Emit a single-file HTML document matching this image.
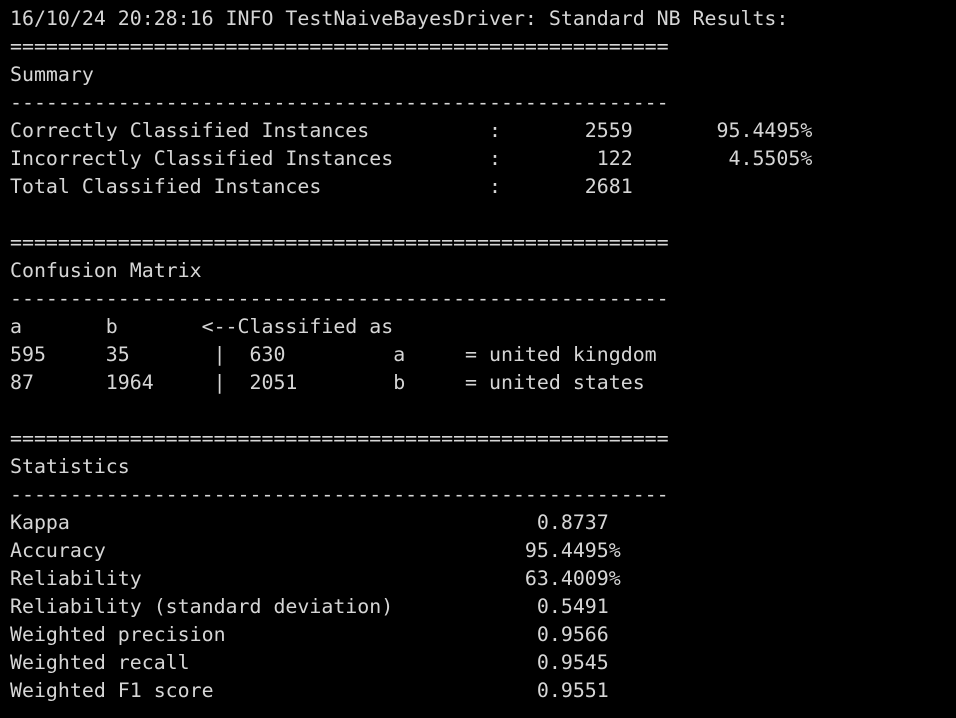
<!DOCTYPE html>
<html><head><meta charset="utf-8"><style>
html,body{margin:0;padding:0;background:#000;width:956px;height:718px;overflow:hidden}
pre{margin:0;position:absolute;left:10px;top:5px;font-family:"DejaVu Sans Mono","Liberation Mono",monospace;font-size:19.9px;line-height:28px;color:#d6d6d6}
</style></head><body>
<pre>16/10/24 20:28:16 INFO TestNaiveBayesDriver: Standard NB Results:
=======================================================
Summary
-------------------------------------------------------
Correctly Classified Instances          :       2559       95.4495%
Incorrectly Classified Instances        :        122        4.5505%
Total Classified Instances              :       2681

=======================================================
Confusion Matrix
-------------------------------------------------------
a       b       &lt;--Classified as
595     35       |  630         a     = united kingdom
87      1964     |  2051        b     = united states

=======================================================
Statistics
-------------------------------------------------------
Kappa                                       0.8737
Accuracy                                   95.4495%
Reliability                                63.4009%
Reliability (standard deviation)            0.5491
Weighted precision                          0.9566
Weighted recall                             0.9545
Weighted F1 score                           0.9551</pre>
</body></html>
